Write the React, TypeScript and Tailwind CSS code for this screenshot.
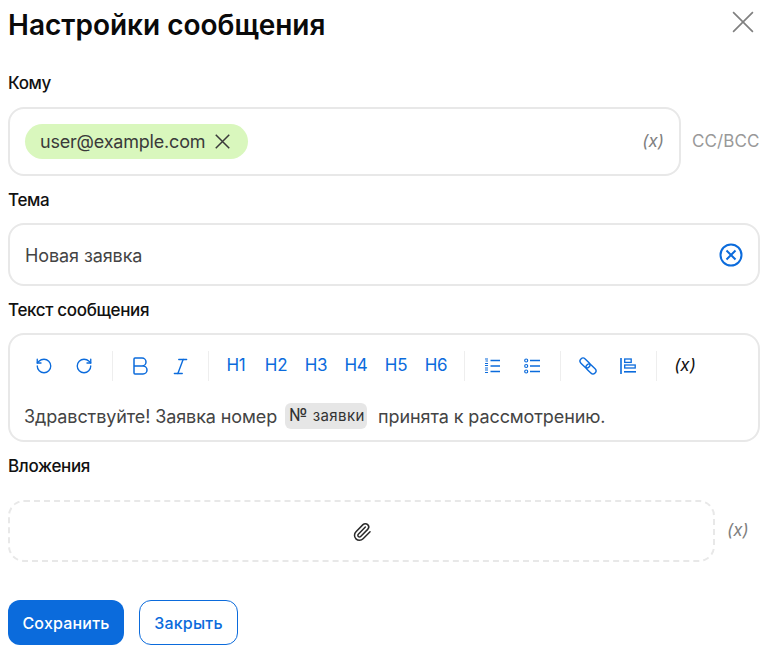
import React from 'react';
import { RotateCcw, RotateCw, Bold, Italic, Paperclip } from 'lucide-react';

const font = "font-['Inter','Noto_Sans',sans-serif]";
const label = 'text-[17px] font-medium leading-6 text-[#111111] tracking-[-0.33px]';

const Divider = () => <div className="w-px h-[30px] bg-[#eeeeee] mx-[7.5px]" />;

const ToolBtn = ({ children }: { children: React.ReactNode }) => (
  <div className="w-10 h-[30px] flex items-center justify-center text-[#0b6bdc] text-[17px] tracking-[-0.3px]">{children}</div>
);

const Cross = ({ size, width }: { size: number; width: number }) => (
  <svg width={size} height={size} viewBox="0 0 20 20" fill="none" stroke="currentColor" strokeWidth={width}>
    <path d="M1 1l18 18M19 1L1 19" />
  </svg>
);

const CircleCross = () => (
  <svg width="24" height="24" viewBox="0 0 24 24" fill="none" stroke="currentColor" strokeWidth="2">
    <circle cx="12" cy="12" r="10.5" />
    <path d="M7.5 7.5l9 9M16.5 7.5l-9 9" />
  </svg>
);

const OrderedIcon = () => (
  <svg width="16" height="16" viewBox="0 0 16 16" fill="none" stroke="currentColor">
    <path d="M6.5 2.5H16M6.5 8H16M6.5 13.5H16" strokeWidth="1.3" />
    <path d="M1 1h3M1.5 3h2.5M1 5.5h3M1 7.5h3M1 10h3M1 12h3M1 14.5h3" strokeWidth="1.2" />
  </svg>
);

const BulletIcon = () => (
  <svg width="16" height="16" viewBox="0 0 16 16" fill="none" stroke="currentColor">
    <circle cx="2.2" cy="2.5" r="1.5" strokeWidth="1.2" />
    <circle cx="2.2" cy="8" r="1.5" strokeWidth="1.2" />
    <circle cx="2.2" cy="13.5" r="1.5" strokeWidth="1.2" />
    <path d="M6 2.5H16M6 8H16M6 13.5H16" strokeWidth="1.3" />
  </svg>
);

const LinkIcon = () => (
  <svg width="18" height="18" viewBox="0 0 18 18" fill="none" stroke="currentColor" strokeWidth="1.4">
    <g transform="rotate(45 9 9)">
      <rect x="-1" y="6" width="11.5" height="6" rx="3" />
      <rect x="7.5" y="6" width="11.5" height="6" rx="3" />
    </g>
  </svg>
);

const AlignIcon = () => (
  <svg width="16" height="16" viewBox="0 0 16 16" fill="none" stroke="currentColor" strokeWidth="1.3">
    <path d="M1 0v16" strokeWidth="1.6" />
    <rect x="4.7" y="1" width="6.5" height="3.4" />
    <rect x="4.7" y="7" width="10.5" height="3" />
    <path d="M4 13.8h12" strokeWidth="1.6" />
  </svg>
);

export default function App() {
  return (
    <div className={`${font} w-[773px] h-[653px] bg-white px-2 overflow-hidden`}>
      <div className="flex items-center justify-between h-[50px]">
        <h1 className="text-[28px] font-semibold text-[#0a0a0a]">Настройки сообщения</h1>
        <span className="text-[#808080] mr-[11px] mb-[7px]"><Cross size={22} width={1.5} /></span>
      </div>

      <div className={`mt-[21px] ${label}`}>Кому</div>
      <div className="mt-3 flex items-center">
        <div className="w-[673px] h-[69px] border-2 border-[#e8e8e8] rounded-2xl flex items-center justify-between pl-[15px] pr-[15px]">
          <div className="h-[35px] w-[223px] rounded-full bg-[#d9f7bd] flex items-center pl-[15px] text-[#3a3a3a] text-[18px] tracking-[-0.2px]">
            user@example.com
            <span className="ml-[10px]"><Cross size={15} width={2} /></span>
          </div>
          <span className="italic text-[17px] text-[#808080]">(x)</span>
        </div>
        <span className="ml-[11px] text-[#999999] text-[17px] tracking-[0.1px]">CC/BCC</span>
      </div>

      <div className={`mt-3 ${label}`}>Тема</div>
      <div className="mt-[11px] h-[63px] w-[752px] border-2 border-[#e8e8e8] rounded-2xl flex items-center justify-between pl-[15px] pr-[15px]">
        <span className="pt-px text-[18px] text-[#444444] tracking-[-0.1px]">Новая заявка</span>
        <span className="text-[#0b6bdc]"><CircleCross /></span>
      </div>

      <div className={`mt-3 ${label}`}>Текст сообщения</div>
      <div className="mt-[11px] h-[109px] w-[752px] border-2 border-[#e8e8e8] rounded-2xl px-[14px] pt-[16px]">
        <div className="flex items-center">
          <ToolBtn><RotateCcw className="w-[18px] h-[18px]" strokeWidth={1.8} /></ToolBtn>
          <ToolBtn><RotateCw className="w-[18px] h-[18px]" strokeWidth={1.8} /></ToolBtn>
          <Divider />
          <ToolBtn><Bold className="w-6 h-6" strokeWidth={1.5} /></ToolBtn>
          <ToolBtn><Italic className="w-[21px] h-[21px]" strokeWidth={1.6} /></ToolBtn>
          <Divider />
          <ToolBtn>H1</ToolBtn>
          <ToolBtn>H2</ToolBtn>
          <ToolBtn>H3</ToolBtn>
          <ToolBtn>H4</ToolBtn>
          <ToolBtn>H5</ToolBtn>
          <ToolBtn>H6</ToolBtn>
          <Divider />
          <ToolBtn><OrderedIcon /></ToolBtn>
          <ToolBtn><BulletIcon /></ToolBtn>
          <Divider />
          <ToolBtn><LinkIcon /></ToolBtn>
          <ToolBtn><AlignIcon /></ToolBtn>
          <Divider />
          <div className="w-10 h-[30px] flex items-center justify-center pl-[2px] italic text-[17px] text-[#111111]">(x)</div>
        </div>
        <div className="mt-[22px] h-[26px] flex items-center text-[18px] text-[#444444] tracking-[-0.1px]">
          Здравствуйте! Заявка номер
          <span className="ml-[8px] mr-[11px] h-[26px] w-[82px] pl-1 rounded-md bg-[#e6e6e6] flex items-center text-[15px] tracking-[0.4px] text-[#333333] font-normal">
            <span className="text-[17px] font-normal mr-[5px] tracking-normal">№</span>заявки
          </span>
          принята к рассмотрению.
        </div>
      </div>

      <div className={`mt-3 ${label}`}>Вложения</div>
      <div className="mt-[22px] flex items-center">
        <div className="w-[707px] h-[62px] border-2 border-dashed border-[#e8e8e8] rounded-2xl flex items-center justify-center">
          <Paperclip className="w-5 h-5 mt-px text-[#2a2a2a]" strokeWidth={1.8} />
        </div>
        <span className="ml-3 italic text-[17px] text-[#808080]">(x)</span>
      </div>

      <div className="mt-[38px] flex items-center gap-[15px]">
        <button className="w-[116px] h-[45px] rounded-xl bg-[#0b6bdc] text-white text-base font-medium tracking-[0.2px]">Сохранить</button>
        <button className="w-[99px] h-[45px] rounded-xl border border-[#0b6bdc] bg-white text-[#0b6bdc] text-base font-medium tracking-[0.2px]">Закрыть</button>
      </div>
    </div>
  );
}
